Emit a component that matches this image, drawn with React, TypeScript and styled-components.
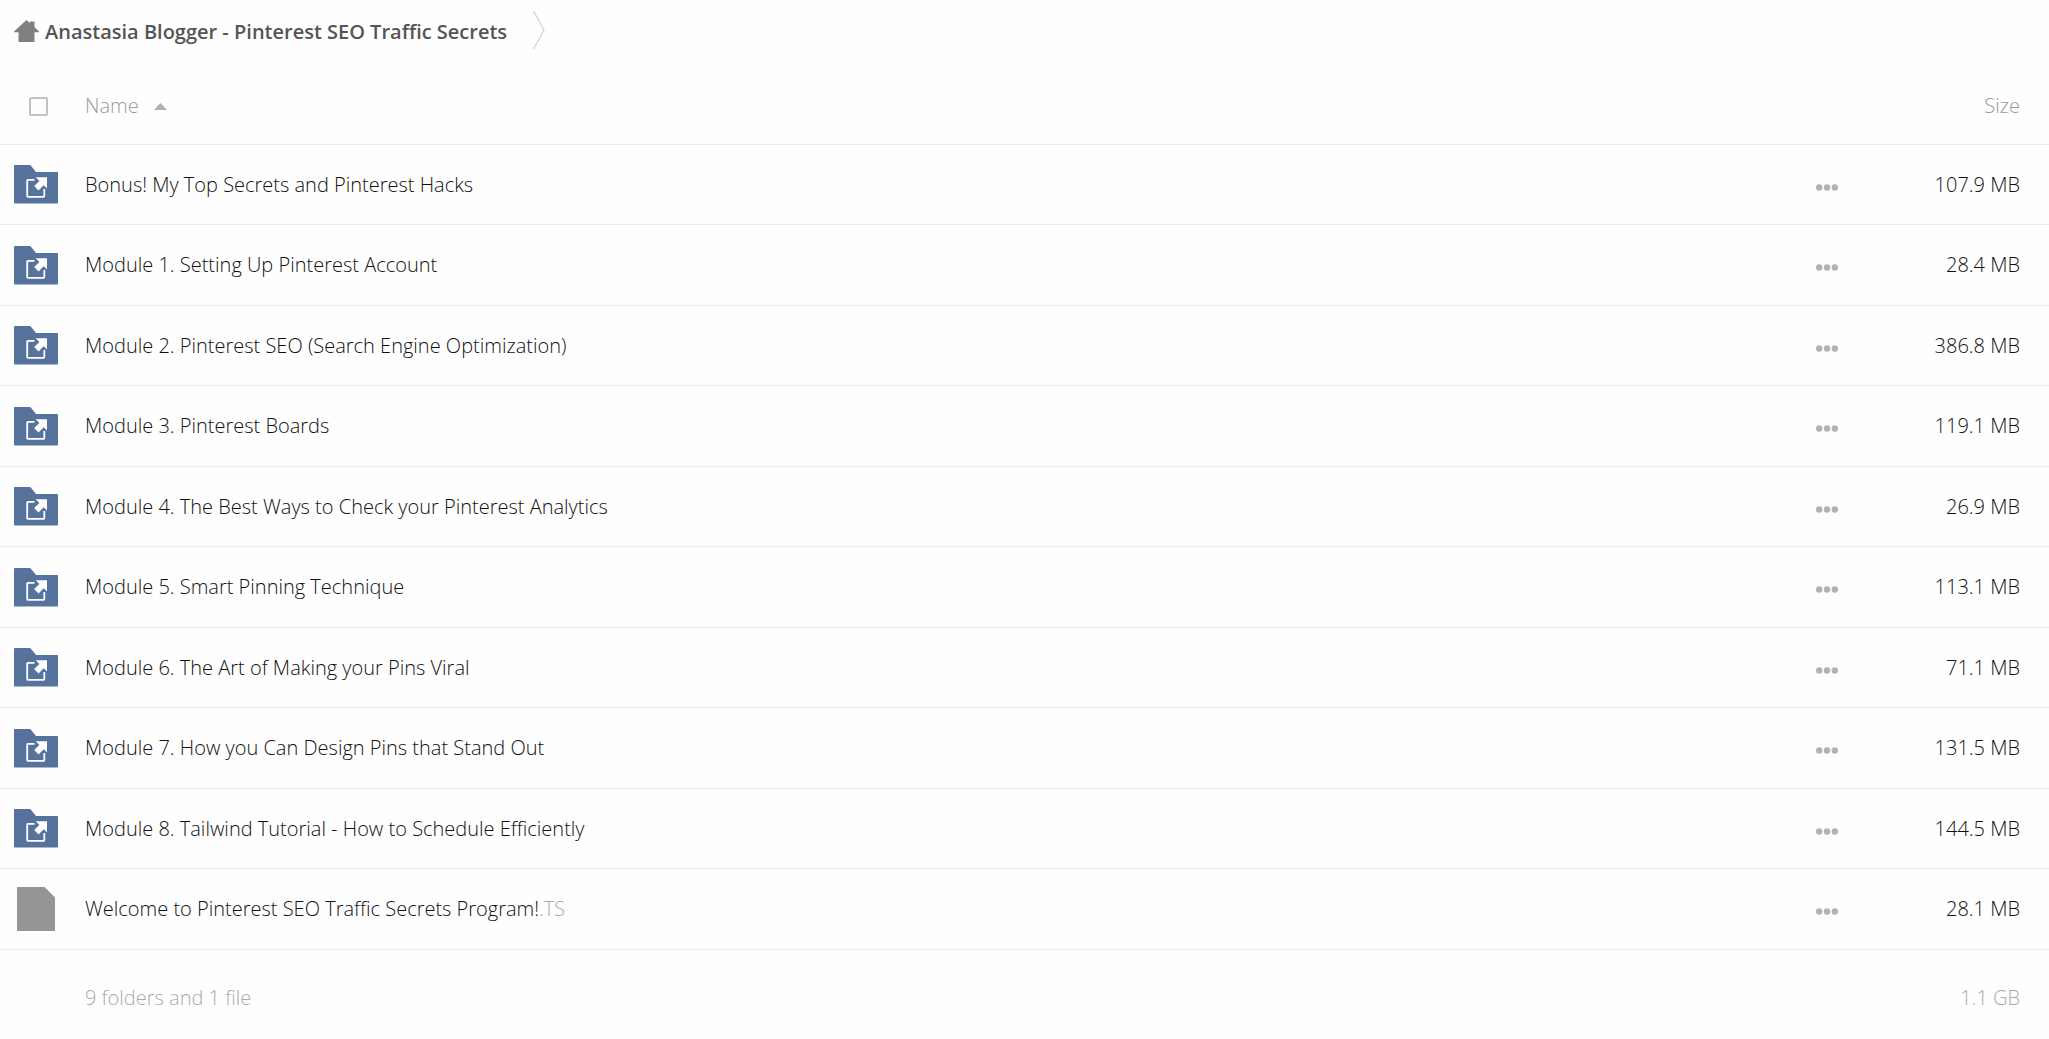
import React, { useState } from "react";
import styled, { createGlobalStyle } from "styled-components";

const GlobalStyle = createGlobalStyle`
  *, *::before, *::after { box-sizing: border-box; }
  body {
    margin: 0;
    background: #fefefe;
    color: #111;
    font-family: "Open Sans", "Noto Sans", sans-serif;
    font-size: 20px;
    font-weight: 300;
    line-height: 28px;
  }
`;

const Breadcrumbs = styled.nav`
  display: flex;
  align-items: center;
  gap: 24px;
  height: 64px;
  padding: 0 14px 4px;
`;

const RootLink = styled.a`
  display: flex;
  align-items: center;
  gap: 6px;
  padding-top: 4px;
  color: #555;
  font-weight: 600;
  text-decoration: none;
  white-space: nowrap;
`;

const FileTable = styled.table`
  width: 100%;
  table-layout: fixed;
  border-collapse: separate;
  border-spacing: 0;
`;

const IconColumn = styled.col`
  width: 85px;
`;
const MenuColumn = styled.col`
  width: 80px;
`;
const SizeColumn = styled.col`
  width: 182px;
`;

const HeaderRow = styled.tr`
  height: 81px;
`;

const FileRow = styled.tr`
  height: 80px;
  &:nth-child(even) {
    height: 81px;
  }
`;

const FooterRow = styled.tr`
  height: 96px;
`;

const HeaderCell = styled.th<{ $end?: boolean }>`
  padding: ${(p) => (p.$end ? "4px 29px 0 0" : "4px 0 0")};
  border-bottom: 1px solid #ebebeb;
  color: #999;
  font-weight: 300;
  text-align: ${(p) => (p.$end ? "right" : "left")};
`;

const Cell = styled.td<{ $end?: boolean; $center?: boolean }>`
  padding: ${(p) => (p.$end ? "0 29px 0 0" : "0")};
  border-bottom: 1px solid #ebebeb;
  text-align: ${(p) => (p.$end ? "right" : p.$center ? "center" : "left")};
  white-space: nowrap;
`;

const FooterCell = styled.td<{ $end?: boolean }>`
  padding: ${(p) => (p.$end ? "0 29px 0 0" : "0")};
  color: #aaa;
  text-align: ${(p) => (p.$end ? "right" : "left")};
`;

const SelectAll = styled.input`
  display: block;
  appearance: none;
  width: 19px;
  height: 19px;
  margin: 0 0 0 29px;
  border: 2px solid #c2c2c2;
  border-radius: 2px;
  background: #fefefe;
  &:checked {
    background: #55739c;
  }
`;

const PlainButton = styled.button`
  display: inline-flex;
  align-items: center;
  gap: 15px;
  padding: 0;
  border: 0;
  background: none;
  color: inherit;
  font: inherit;
  cursor: pointer;
`;

const MenuButton = styled(PlainButton)`
  height: 28px;
  padding-top: 4px;
`;

const IconBox = styled.span`
  display: flex;
  justify-content: center;
  width: 44px;
  margin-left: 14px;
`;

const NameLink = styled.a`
  color: inherit;
  text-decoration: none;
`;

const Extension = styled.span`
  color: #aaa;
`;

const HomeIcon = () => (
  <svg width="25" height="24" viewBox="0 0 25 24" fill="#808080" aria-hidden="true">
    <path d="M12.500 0 16 3V1.500h4.500V7L25 11.500v.7h-4.500V22h-16v-9.800H0v-.7z" />
  </svg>
);

const CrumbArrow = () => (
  <svg width="16" height="40" viewBox="0 0 16 40" fill="none" stroke="#d4d4d4" strokeWidth="1.300" aria-hidden="true">
    <path d="M2.500 1 13 20 2.500 39" />
  </svg>
);

const SortArrow = () => (
  <svg width="13" height="7" viewBox="0 0 13 7" fill="#b0b0b0" aria-hidden="true">
    <path d="M6.500 0 13 7H0z" />
  </svg>
);

const FolderIcon = () => (
  <svg width="44" height="39" viewBox="0 0 44 39" aria-hidden="true">
    <path fill="#55739c" d="M1 0h14.500q.8 0 1.300.6L22 7h21q1 0 1 1v29.500q0 1-1 1H1q-1 0-1-1V1q0-1 1-1z" />
    <path
      fill="none"
      stroke="#fff"
      strokeWidth="1.800"
      strokeLinejoin="round"
      d="M20.500 14.900h-6.600q-.7 0-.7.7v15.500q0 .7.700.7h15.700q.7 0 .7-.7v-7"
    />
    <path fill="#fff" d="M21.700 12.300H33V23.500l-3.300-3.300-5.200 5.200-4.300-4.300 5.200-5.200z" />
  </svg>
);

const FileIcon = () => (
  <svg width="38" height="44" viewBox="0 0 38 44" fill="#959595" aria-hidden="true">
    <path d="M1 0h26.500L38 10.500V43q0 1-1 1H1q-1 0-1-1V1q0-1 1-1z" />
  </svg>
);

const DotsIcon = () => (
  <svg width="22" height="7" viewBox="0 0 22 7" fill="#b2b2b2" aria-hidden="true">
    <circle cx="3.200" cy="3.500" r="3.200" />
    <circle cx="11" cy="3.500" r="3.200" />
    <circle cx="18.800" cy="3.500" r="3.200" />
  </svg>
);

type Entry = { name: string; size: string; extension?: string };

const entries: Entry[] = [
  { name: "Bonus! My Top Secrets and Pinterest Hacks", size: "107.9 MB" },
  { name: "Module 1. Setting Up Pinterest Account", size: "28.4 MB" },
  { name: "Module 2. Pinterest SEO (Search Engine Optimization)", size: "386.8 MB" },
  { name: "Module 3. Pinterest Boards", size: "119.1 MB" },
  { name: "Module 4. The Best Ways to Check your Pinterest Analytics", size: "26.9 MB" },
  { name: "Module 5. Smart Pinning Technique", size: "113.1 MB" },
  { name: "Module 6. The Art of Making your Pins Viral", size: "71.1 MB" },
  { name: "Module 7. How you Can Design Pins that Stand Out", size: "131.5 MB" },
  { name: "Module 8. Tailwind Tutorial - How to Schedule Efficiently", size: "144.5 MB" },
  { name: "Welcome to Pinterest SEO Traffic Secrets Program!", size: "28.1 MB", extension: ".TS" },
];

export default function App() {
  const [allSelected, setAllSelected] = useState(false);

  return (
    <>
      <GlobalStyle />
      <Breadcrumbs aria-label="Breadcrumb">
        <RootLink href="#">
          <HomeIcon />
          Anastasia Blogger - Pinterest SEO Traffic Secrets
        </RootLink>
        <CrumbArrow />
      </Breadcrumbs>
      <main>
        <FileTable>
          <colgroup>
            <IconColumn />
            <col />
            <MenuColumn />
            <SizeColumn />
          </colgroup>
          <thead>
            <HeaderRow>
              <HeaderCell>
                <SelectAll
                  type="checkbox"
                  aria-label="Select all"
                  checked={allSelected}
                  onChange={(e) => setAllSelected(e.target.checked)}
                />
              </HeaderCell>
              <HeaderCell aria-sort="ascending">
                <PlainButton type="button">
                  Name
                  <SortArrow />
                </PlainButton>
              </HeaderCell>
              <HeaderCell />
              <HeaderCell $end>Size</HeaderCell>
            </HeaderRow>
          </thead>
          <tbody>
            {entries.map((entry) => (
              <FileRow key={entry.name}>
                <Cell>
                  <IconBox>{entry.extension ? <FileIcon /> : <FolderIcon />}</IconBox>
                </Cell>
                <Cell>
                  <NameLink href="#">
                    {entry.name}
                    {entry.extension && <Extension>{entry.extension}</Extension>}
                  </NameLink>
                </Cell>
                <Cell $center>
                  <MenuButton type="button" aria-label={`Actions for ${entry.name}`}>
                    <DotsIcon />
                  </MenuButton>
                </Cell>
                <Cell $end>{entry.size}</Cell>
              </FileRow>
            ))}
          </tbody>
          <tfoot>
            <FooterRow>
              <FooterCell />
              <FooterCell colSpan={2}>9 folders and 1 file</FooterCell>
              <FooterCell $end>1.1 GB</FooterCell>
            </FooterRow>
          </tfoot>
        </FileTable>
      </main>
    </>
  );
}
